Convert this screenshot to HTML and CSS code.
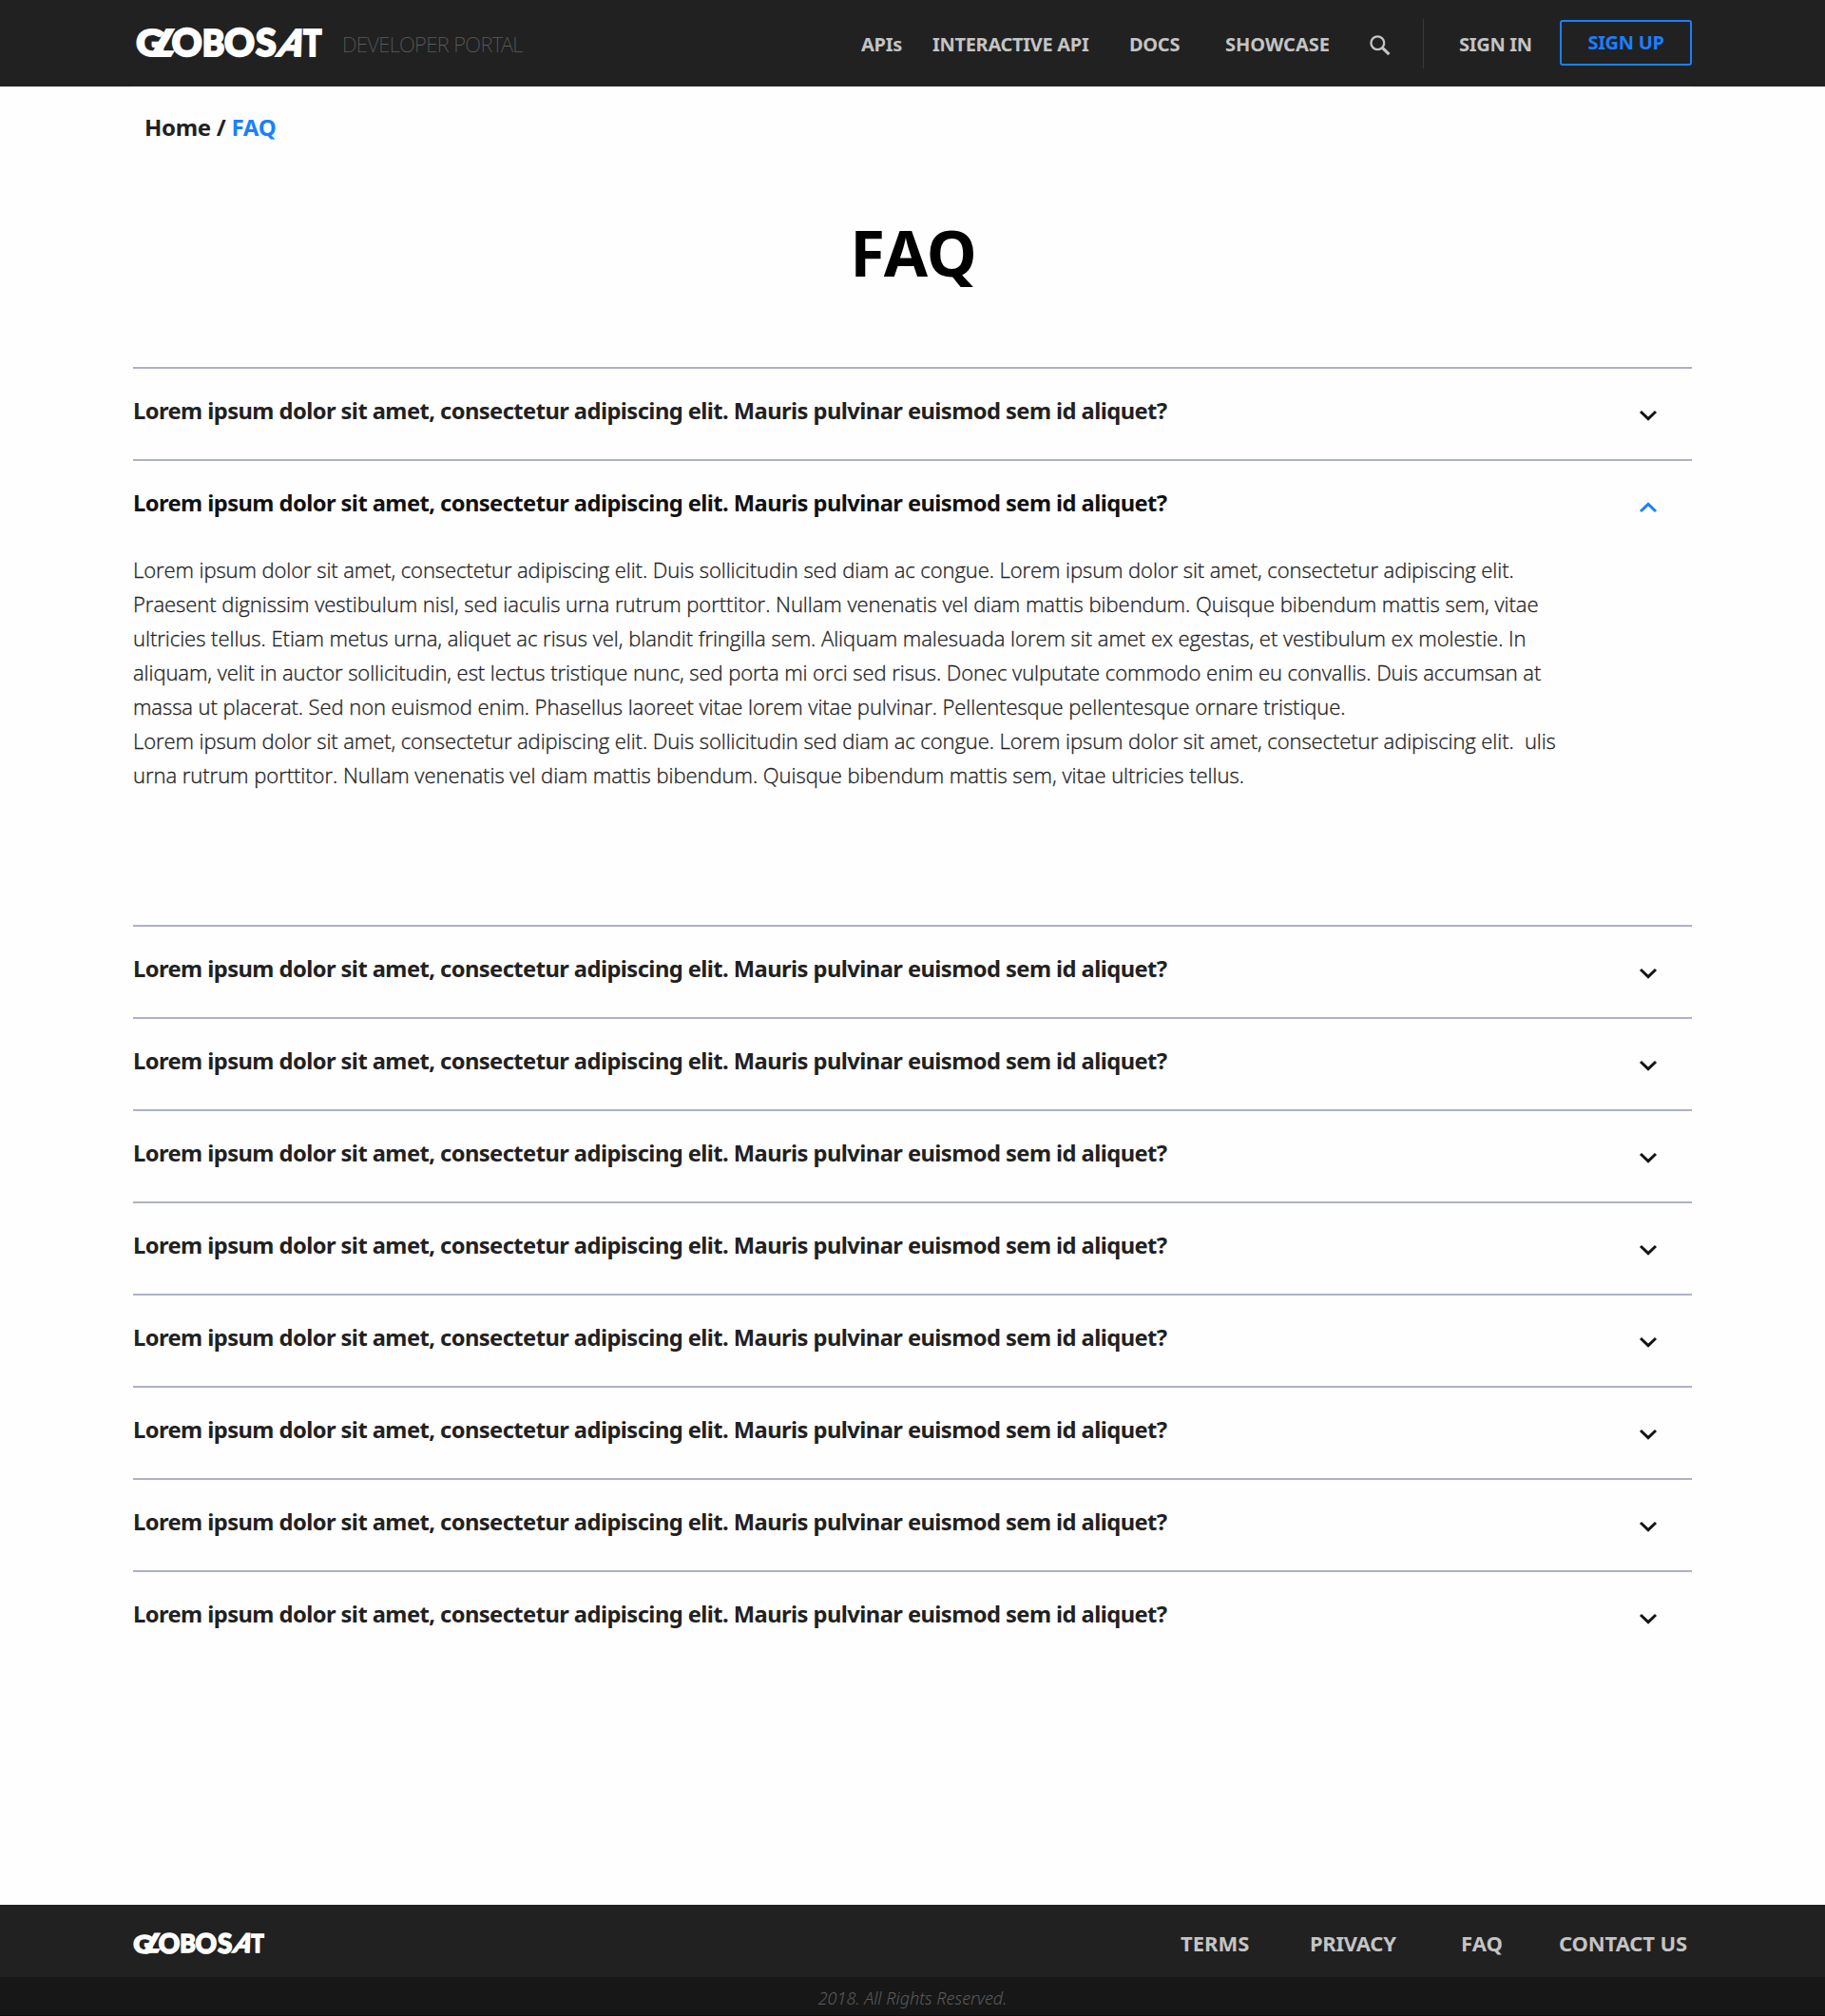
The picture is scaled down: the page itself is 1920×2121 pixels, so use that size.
FILE: index.html
```html
<!DOCTYPE html>
<html lang="en">
<head>
<meta charset="utf-8">
<title>FAQ - Globosat Developer Portal</title>
<link rel="stylesheet" href="styles.css">
</head>
<body>
<header class="header">
  <div class="container header-row">
    <svg class="logo wordmark" viewBox="0 0 197 33">
      <text transform="translate(.2 30.1) scale(1.06 1.01)">G</text>
      <text transform="translate(12.8 29.8) skewX(-30) scale(1.2 1)">L</text>
      <text transform="translate(37.8 30.3) scale(1.02 1.04)">O</text>
      <text transform="translate(69.8 29.8) scale(.92 1)">B</text>
      <text transform="translate(93 30.3) scale(1.02 1.04)">O</text>
      <text transform="translate(126 30.3) scale(1.02 1.04)">S</text>
      <text transform="translate(147.6 29.8) skewX(-21.3) scale(.917 1)">A</text>
      <text transform="translate(176.2 29.8) scale(.82 1)">T</text>
    </svg>
    <span class="portal">DEVELOPER PORTAL</span>
    <nav class="nav">
      <a>APIs</a>
      <a>INTERACTIVE API</a>
      <a>DOCS</a>
      <a class="showcase">SHOWCASE</a>
      <svg class="search" viewBox="0 0 22 22"><circle cx="8.3" cy="8.3" r="6.9" fill="none" stroke="currentColor" stroke-width="2.3"/><path d="M13.2 13.2 20.4 20.2" stroke="currentColor" stroke-width="3.2"/></svg>
      <span class="divider"></span>
      <a>SIGN IN</a>
      <a class="signup">SIGN UP</a>
    </nav>
  </div>
</header>

<main class="container main">
  <div class="breadcrumb">Home / <span>FAQ</span></div>
  <h1>FAQ</h1>
  <section class="faq">
    <article class="item"><h2>Lorem ipsum dolor sit amet, consectetur adipiscing elit. Mauris pulvinar euismod sem id aliquet?</h2><svg class="chevron" viewBox="0 0 20 12"><path d="M2 2 10 9.6 18 2"/></svg></article>
    <article class="item open">
      <h2>Lorem ipsum dolor sit amet, consectetur adipiscing elit. Mauris pulvinar euismod sem id aliquet?</h2><svg class="chevron" viewBox="0 0 20 12"><path d="M2 2 10 9.6 18 2"/></svg>
      <div class="answer">
        <p class="l1">Lorem ipsum dolor sit amet, consectetur adipiscing elit. Duis sollicitudin sed diam ac congue. Lorem ipsum dolor sit amet, consectetur adipiscing elit.</p>
        <p class="l2">Praesent dignissim vestibulum nisl, sed iaculis urna rutrum porttitor. Nullam venenatis vel diam mattis bibendum. Quisque bibendum mattis sem, vitae</p>
        <p class="l2">ultricies tellus. Etiam metus urna, aliquet ac risus vel, blandit fringilla sem. Aliquam malesuada lorem sit amet ex egestas, et vestibulum ex molestie. In</p>
        <p class="l4">aliquam, velit in auctor sollicitudin, est lectus tristique nunc, sed porta mi orci sed risus. Donec vulputate commodo enim eu convallis. Duis accumsan at</p>
        <p class="l4">massa ut placerat. Sed non euismod enim. Phasellus laoreet vitae lorem vitae pulvinar. Pellentesque pellentesque ornare tristique.</p>
        <p class="l1">Lorem ipsum dolor sit amet, consectetur adipiscing elit. Duis sollicitudin sed diam ac congue. Lorem ipsum dolor sit amet, consectetur adipiscing elit.&nbsp; ulis</p>
        <p class="l2">urna rutrum porttitor. Nullam venenatis vel diam mattis bibendum. Quisque bibendum mattis sem, vitae ultricies tellus.</p>
      </div>
    </article>
    <article class="item"><h2>Lorem ipsum dolor sit amet, consectetur adipiscing elit. Mauris pulvinar euismod sem id aliquet?</h2><svg class="chevron" viewBox="0 0 20 12"><path d="M2 2 10 9.6 18 2"/></svg></article>
    <article class="item"><h2>Lorem ipsum dolor sit amet, consectetur adipiscing elit. Mauris pulvinar euismod sem id aliquet?</h2><svg class="chevron" viewBox="0 0 20 12"><path d="M2 2 10 9.6 18 2"/></svg></article>
    <article class="item"><h2>Lorem ipsum dolor sit amet, consectetur adipiscing elit. Mauris pulvinar euismod sem id aliquet?</h2><svg class="chevron" viewBox="0 0 20 12"><path d="M2 2 10 9.6 18 2"/></svg></article>
    <article class="item"><h2>Lorem ipsum dolor sit amet, consectetur adipiscing elit. Mauris pulvinar euismod sem id aliquet?</h2><svg class="chevron" viewBox="0 0 20 12"><path d="M2 2 10 9.6 18 2"/></svg></article>
    <article class="item"><h2>Lorem ipsum dolor sit amet, consectetur adipiscing elit. Mauris pulvinar euismod sem id aliquet?</h2><svg class="chevron" viewBox="0 0 20 12"><path d="M2 2 10 9.6 18 2"/></svg></article>
    <article class="item"><h2>Lorem ipsum dolor sit amet, consectetur adipiscing elit. Mauris pulvinar euismod sem id aliquet?</h2><svg class="chevron" viewBox="0 0 20 12"><path d="M2 2 10 9.6 18 2"/></svg></article>
    <article class="item"><h2>Lorem ipsum dolor sit amet, consectetur adipiscing elit. Mauris pulvinar euismod sem id aliquet?</h2><svg class="chevron" viewBox="0 0 20 12"><path d="M2 2 10 9.6 18 2"/></svg></article>
    <article class="item"><h2>Lorem ipsum dolor sit amet, consectetur adipiscing elit. Mauris pulvinar euismod sem id aliquet?</h2><svg class="chevron" viewBox="0 0 20 12"><path d="M2 2 10 9.6 18 2"/></svg></article>
  </section>
</main>

<footer class="footer">
  <div class="container footer-row">
    <svg class="logo-small wordmark" viewBox="0 0 197 33">
      <text transform="translate(.2 30.1) scale(1.06 1.01)">G</text>
      <text transform="translate(12.8 29.8) skewX(-30) scale(1.2 1)">L</text>
      <text transform="translate(37.8 30.3) scale(1.02 1.04)">O</text>
      <text transform="translate(69.8 29.8) scale(.92 1)">B</text>
      <text transform="translate(93 30.3) scale(1.02 1.04)">O</text>
      <text transform="translate(126 30.3) scale(1.02 1.04)">S</text>
      <text transform="translate(147.6 29.8) skewX(-21.3) scale(.917 1)">A</text>
      <text transform="translate(176.2 29.8) scale(.82 1)">T</text>
    </svg>
    <nav class="footer-nav">
      <a>TERMS</a>
      <a class="privacy">PRIVACY</a>
      <a>FAQ</a>
      <a class="contact">CONTACT US</a>
    </nav>
  </div>
  <div class="copyright">2018. All Rights Reserved.</div>
</footer>
</body>
</html>
```
FILE: styles.css
```css
* { box-sizing: border-box; }

body {
  margin: 0;
  background: #fefefe;
  color: #212121;
  font-family: "Noto Sans", "Open Sans", sans-serif;
}

h1, h2, p { margin: 0; }

.container {
  width: 1640px;
  margin: 0 auto;
}

.wordmark {
  overflow: visible;
  font: 900 38.5px Lato, sans-serif;
  fill: #fff;
  stroke: #fff;
  stroke-width: 2.2px;
}

/* Header */
.header {
  height: 91px;
  background: #212121;
}

.header-row {
  display: flex;
  height: 91px;
  border-bottom: 1px solid #2b2526;
}

.logo {
  flex: none;
  width: 197px;
  height: 33px;
  margin: 29px 0 0 2.5px;
}

.portal {
  flex: none;
  width: 566.5px;
  padding-left: 20.5px;
  color: #5c5c5c;
  font-size: 22px;
  font-weight: 200;
  line-height: 92px;
  letter-spacing: -.6px;
}

.nav {
  display: grid;
  grid-template-columns: 75px 207px 101px 152px 56px 38px 106px 139px;
  color: #c4c4c4;
  font-size: 20px;
  font-weight: 700;
  line-height: 93px;
  letter-spacing: -.3px;
  white-space: nowrap;
}

.showcase { letter-spacing: 0; }

.search {
  width: 22px;
  height: 22px;
  margin-top: 37px;
}

.divider {
  width: 1px;
  height: 52px;
  margin-top: 20px;
  background: #3a3a3a;
}

.signup {
  height: 48px;
  margin-top: 21px;
  border: 2px solid #1a80ff;
  border-radius: 3px;
  color: #1a80ff;
  line-height: 43px;
  text-align: center;
}

/* Content */
.main {
  height: 1913px;
  padding-top: 25px;
}

.breadcrumb {
  padding-left: 12px;
  font-size: 24px;
  font-weight: 700;
  line-height: 36px;
  letter-spacing: -.3px;
}

.breadcrumb span { color: #1a80ff; }

h1 {
  margin: 73px 0 81px;
  padding-left: 2px;
  color: #000;
  font-size: 67px;
  font-weight: 700;
  line-height: 80px;
  text-align: center;
}

.item {
  display: grid;
  grid-template-columns: 1fr 56px;
  align-content: start;
  height: 97px;
  border-top: 2px solid #adb0c7;
}

.item h2 {
  font-size: 23.7px;
  font-weight: 680;
  line-height: 89px;
  letter-spacing: -.556px;
}

.chevron {
  width: 20px;
  height: 12px;
  margin-top: 42.5px;
  color: #141414;
  fill: none;
  stroke: currentColor;
  stroke-width: 3px;
}

.open { height: 490px; }

.open h2 { color: #111; }

.open .chevron {
  color: #1a80ff;
  transform: rotate(180deg);
}

.answer {
  grid-column: 1 / -1;
  padding-top: 7px;
  font-family: "Open Sans", "Noto Sans", sans-serif;
  font-size: 22px;
  font-weight: 300;
  line-height: 36px;
  white-space: nowrap;
  -webkit-text-stroke: .3px #212121;
}

.l1 { letter-spacing: -.075px; }
.l2 { letter-spacing: -.026px; }
.l4 { letter-spacing: -.063px; }

/* Footer */
.footer {
  height: 117px;
  background: linear-gradient(#212121 76px, #171717 76px);
}

.footer-row {
  display: flex;
  justify-content: space-between;
  height: 76px;
}

.logo-small {
  width: 139px;
  height: 24px;
  margin-top: 29px;
}

.footer-nav {
  display: grid;
  grid-template-columns: 136px 159px 103px 140px;
  color: #c4c4c4;
  font-size: 22px;
  font-weight: 700;
  line-height: 81px;
  white-space: nowrap;
}

.privacy { letter-spacing: -.3px; }

.contact { letter-spacing: -.12px; }

.copyright {
  height: 41px;
  border-bottom: 1px solid #0e0e0e;
  color: #5c5c5c;
  font-size: 18px;
  font-style: italic;
  font-weight: 300;
  line-height: 44px;
  text-align: center;
}
```
